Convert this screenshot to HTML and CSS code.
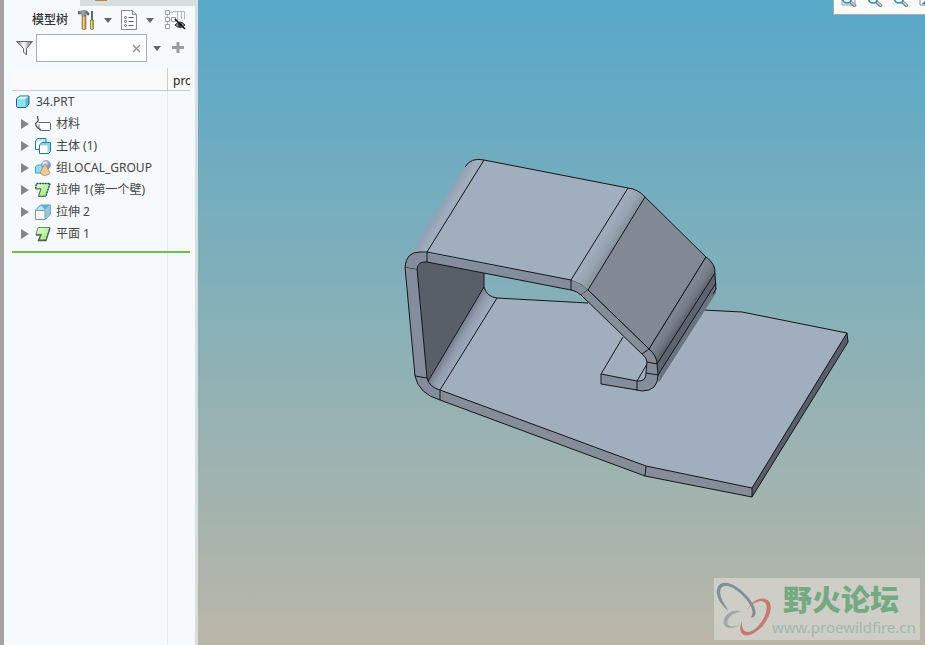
FILE: index.html
```html
<!DOCTYPE html>
<html lang="zh-CN">
<head>
<meta charset="utf-8">
<meta name="viewport" content="width=device-width, initial-scale=1">
<title>34.PRT</title>
<link rel="stylesheet" href="styles.css">
</head>
<body>
<svg class="defs" aria-hidden="true">
  <defs>
    <linearGradient id="steel" x1="0" x2="1"><stop offset="0" stop-color="#555c62"/><stop offset=".45" stop-color="#a9b0b5"/><stop offset="1" stop-color="#4c5258"/></linearGradient>
    <linearGradient id="wood" x1="0" x2="1"><stop offset="0" stop-color="#a87b30"/><stop offset=".4" stop-color="#f3d48e"/><stop offset="1" stop-color="#a2762f"/></linearGradient>
    <linearGradient id="funnel" x1="0" x2="1"><stop offset="0" stop-color="#777"/><stop offset=".45" stop-color="#fff"/><stop offset="1" stop-color="#666"/></linearGradient>
    <linearGradient id="leaf" x1="0" x2="1" y2="1"><stop offset="0" stop-color="#e3ffd3"/><stop offset="1" stop-color="#98e878"/></linearGradient>
    <radialGradient id="ball" cx=".35" cy=".3"><stop offset="0" stop-color="#fff"/><stop offset="1" stop-color="#8795d3"/></radialGradient>
    <symbol id="lens" viewBox="0 0 18 16"><path d="M9.500 11 14.500 15.500" stroke="#777e83" stroke-width="3.400"/><path d="m10 11 4 3.700" stroke="#d7dadd" stroke-width="1.300"/><circle cx="6" cy="7.500" r="4.500" fill="#e9f7fc" stroke="#338cad" stroke-width="1.600"/></symbol>
  </defs>
</svg>
<div class="app">
  <aside class="panel">
    <div class="tabs"><span class="tab-mark"></span></div>
    <div class="toolbar">
      <h1>模型树</h1>
      <button class="tool" aria-label="设置"><svg width="18" height="22" viewBox="0 0 18 22"><path d="M4 6h4v14q-2 1.500-4 0z" fill="url(#wood)" stroke="#8b692e" stroke-width=".6"/><path d="M0 2q2 1 3 0 5-2 8 2v2H9Q8 4 7 4v3H4V5H0z" fill="url(#steel)" stroke="#555c62" stroke-width=".5"/><path d="M14 2v9" stroke="#61686e" stroke-width="2"/><path d="M12.500 11h3v9q-1.500 1.500-3 0z" fill="url(#wood)" stroke="#8b692e" stroke-width=".6"/></svg></button>
      <button class="drop" aria-label="设置选项"></button>
      <button class="tool" aria-label="显示"><svg width="17" height="21" viewBox="0 0 17 21"><path d="M.5.500h11l4 4v15H.5z" fill="#fff" stroke="#858b90"/><path d="M11.500.500v4h4" fill="#dce0e2" stroke="#858b90"/><g fill="#fff" stroke="#555b60"><circle cx="4.500" cy="7.500" r="1"/><circle cx="4.500" cy="11.500" r="1"/><circle cx="4.500" cy="15.500" r="1"/><path d="M7.500 7.500h5m-5 4h5m-5 4h5"/></g></svg></button>
      <button class="drop" aria-label="显示选项"></button>
      <button class="tool last" aria-label="隐藏列"><svg width="22" height="22" viewBox="0 0 22 22" fill="none"><path d="M2.500 5v3m0 4v3M5 3.500h3m-3 7h3M8 2.500h11.500v8M12.500 3v9M16.500 3v7" stroke="#b5b8ba"/><g fill="#fff" stroke="#9a9da0"><path d="M.5 1.500h4v4h-4zM.5 8.500h4v4h-4zM.5 15.500h4v4h-4zM6.500 8.500h4v4h-4z"/></g><path d="M10 16q5-6 10 0-5 5-10 0z" fill="#888" stroke="#333"/><circle cx="15" cy="16" r="2" fill="#333"/><path d="m10 10 10 10" stroke="#111" stroke-width="1.500"/></svg></button>
    </div>
    <div class="filter">
      <svg width="18" height="16" viewBox="0 0 18 16" aria-hidden="true"><path d="M.5 1.500h16l-6 7V15l-3-3V8.500z" fill="url(#funnel)" stroke="#63676b"/></svg>
      <div class="search"><input type="text" aria-label="过滤"><button class="clear" aria-label="清除"><svg width="9" height="9" viewBox="0 0 9 9"><path d="m1 1 7 7m0-7L1 8" stroke="#8d9092" stroke-width="1.300"/></svg></button></div>
      <button class="drop" aria-label="过滤选项"></button>
      <button class="plus" aria-label="添加"><svg width="12" height="12" viewBox="0 0 12 12"><path d="M6 0v11M0 5.500h12" stroke="#999c9d" stroke-width="3"/></svg></button>
    </div>
    <div class="tree">
      <div class="tree-head"><span></span><span class="col">pro</span></div>
      <div class="tree-body">
        <ul>
          <li class="root"><svg width="16" height="16" viewBox="0 0 16 16"><path d="m1.500 5 3-3h9.500v8l-3 3.500H3q-1.500 0-1.500-1.500z" fill="#5eb7d8" stroke="#176989"/><path d="M2 5h8.500v8H3q-1 0-1-1z" fill="#91dff8"/><path d="m2 5 3-2.500h8.500L10.500 5z" fill="#d8f8ff"/></svg><span>34.PRT</span></li>
          <li><button class="expand" aria-label="展开"></button><svg width="16" height="16" viewBox="0 0 16 16" fill="none"><path d="M3 0q-1 1 0 3T1 7q-1 2 1 4l4 3.500" stroke="#505050" stroke-width="1.300"/><path d="M3.500 6.500H15l.5 1v6l-1 1H6.500L4 11.500V8.500" fill="#fff" stroke="#666"/></svg><span>材料</span></li>
          <li><button class="expand" aria-label="展开"></button><svg width="16" height="16" viewBox="0 0 16 16"><g stroke="#247b9c"><path d="m.5 3 2-2.500h8.500v9l-2 2H.5z" fill="#b8efff"/><path d="M1 3.500h7v7H1z" fill="#fff" stroke="none"/><path d="m4.500 7 2.500-2.500h8.500v9l-2 2h-9z" fill="#8bd9f1"/><path d="M5 7.500h7.500V15H5z" fill="#fff" stroke="none"/></g></svg><span>主体 (1)</span></li>
          <li><button class="expand" aria-label="展开"></button><svg width="16" height="16" viewBox="0 0 16 16"><path d="m.5 7 2-2h7v6l-2 2h-7z" fill="#8bdcf5" stroke="#4aa2c2"/><circle cx="11" cy="5" r="4.500" fill="url(#ball)" stroke="#8491c5" stroke-width=".7"/><path d="m10 3.500 5 9.500q-5 5-10 0z" fill="#eacb91" stroke="#a28352" stroke-width=".7"/></svg><span>组LOCAL_GROUP</span></li>
          <li><button class="expand" aria-label="展开"></button><svg width="16" height="16" viewBox="0 0 16 16"><path d="M1.500 1.500H15l-4 12.500H3.500l2.500-7.500H.5z" fill="url(#leaf)" stroke="#7ba56d"/><path d="M.5 6.500 1.500 1.500H15l-4 12.500" fill="none" stroke="#164f66" stroke-width="1.500" stroke-dasharray="1.500 1.200"/><path d="M.5 7H6l-2.500 7.500H11" fill="none" stroke="#657166"/></svg><span>拉伸 1(第一个壁)</span></li>
          <li><button class="expand" aria-label="展开"></button><svg width="16" height="16" viewBox="0 0 16 16"><path d="m.5 6 5-5h10v9l-5 5.500" fill="#bae7f8" stroke="#5798b4"/><path d="m10.500 6 5-5v9l-5 5z" fill="#8ccae3"/><path d="m6 1 4 5 5-5z" fill="#61adce"/><path d="M.5 6.500h9.500v9H.5z" fill="#f7f7f7" stroke="#8d8f91"/></svg><span>拉伸 2</span></li>
          <li><button class="expand" aria-label="展开"></button><svg width="16" height="16" viewBox="0 0 16 16"><path d="M3 1.500h12L11 14H3.500L6 8.500H1z" fill="url(#leaf)" stroke="#619550"/><path d="M1 9h5l-2.500 5.500H11L15 2" fill="none" stroke="#526058" stroke-width="1.300"/></svg><span>平面 1</span></li>
        </ul>
        <div class="insert-line"></div>
      </div>
    </div>
  </aside>
  <main class="view">
    <svg class="model" viewBox="198 0 727 645" preserveAspectRatio="xMinYMin meet" role="img" aria-label="34.PRT">
      <defs>
        <linearGradient id="bendLow" gradientUnits="userSpaceOnUse" x1="448" y1="337" x2="467" y2="348"><stop offset="0" stop-color="#606873"/><stop offset=".55" stop-color="#8f9bab"/><stop offset="1" stop-color="#a2aebf"/></linearGradient>
        <linearGradient id="bendTop" gradientUnits="userSpaceOnUse" x1="436" y1="207" x2="458" y2="220"><stop offset="0" stop-color="#8e9baf"/><stop offset=".5" stop-color="#a2adbd"/><stop offset="1" stop-color="#9faaba"/></linearGradient>
        <linearGradient id="bendMid" gradientUnits="userSpaceOnUse" x1="600" y1="234" x2="618" y2="245"><stop offset="0" stop-color="#a2adbe"/><stop offset=".5" stop-color="#98a4b2"/><stop offset="1" stop-color="#828c98"/></linearGradient>
        <linearGradient id="bendEnd" gradientUnits="userSpaceOnUse" x1="677" y1="303" x2="692" y2="313"><stop offset="0" stop-color="#818b96"/><stop offset=".5" stop-color="#747d87"/><stop offset="1" stop-color="#555a65"/></linearGradient>
      </defs>
      <path fill="#a1aebd" d="m497 298 91 5 115 7 39 2 105 21-95 155-106-22-206-76z"/>
      <path fill="#858d98" d="m440 390 206 76 106 22v9l-107-21-205-76z"/>
      <path fill="#595f6a" d="m847 333 1 9-96 155v-9z"/>
      <path class="edge" d="m497 298 91 5M703 310l39 2 105 21 1 9-96 155-107-21-205-76M440 390l206 76 106 22 95-155M646 466l-1 10M752 488v9"/>
      <path fill="#585f69" d="m417 268 4-6 7-1 56 11v15l-57 96z"/>
      <path fill="url(#bendLow)" d="m427 383 57-96q3 10 13 11l-57 92q-10-2-13-7z"/>
      <path class="edge" d="M484 273v14q3 10 13 11l-57 92M484 287l-57 96"/>
      <path fill="#838d9d" d="m405 267 12 2 10 109q2 9 13 12v10q-22-7-25-24z"/>
      <path class="edge" d="m405 267 10 109q4 18 25 24v-10q-11-3-13-12l-10-109M405 267l12 2M415 376l12 2"/>
      <path fill="url(#bendTop)" d="m410 256 55-89q6-10 19-7l-57 93q-10-2-17 3z"/>
      <path class="edge" d="M465 167q6-10 19-7"/>
      <path fill="#a1aebd" d="m427 252 57-92 144 28-57 92z"/>
      <path fill="#838d9c" d="M405 267q1-15 15-15l151 28q10 2 17 10l-7 5q-4-4-10-5l-144-28q-9-1-10 7z"/>
      <path class="edge" d="M405 267q1-15 15-15h7l144 28q10 2 17 10M417 269q1-8 10-7l144 28q6 1 10 5M427 252v10M571 280v10M588 290l-7 5M427 252l57-92 144 28"/>
      <path fill="url(#bendMid)" d="m571 280 57-92q10 1 17 9l-57 93q-8-8-17-10z"/>
      <path fill="#808994" d="m588 290 57-93 61 60-57 92z"/>
      <path class="edge" d="M571 280l57-92q10 1 17 9l-57 93 61 59 57-92-61-60"/>
      <path fill="#a1aebd" d="m601 374 22-37 24 25v10l-10 9z"/>
      <path class="edge" d="m601 374 22-37M637 381l10-17"/>
      <path fill="#838d9c" d="m588 290 61 59q8 7 8 15l1 11q0 16-16 16l-5-1-36-6v-10l36 7q9 1 9-8l1-11q0-4-5-8l-61-59z"/>
      <path fill="url(#bendEnd)" d="m649 349 57-92q10 7 9 17l-58 90q-1-9-8-15z"/>
      <path fill="#5d636f" d="m657 364 58-91 1 18-57 91z"/>
      <path fill="#6b737e" d="m658 375 58-92v10l-57 89z"/>
      <path class="edge" d="M649 349l57-92q10 7 9 17l1 15-3 5M657 364l58-91M658 375l58-92M588 290l61 59q8 7 8 15l1 11q0 16-16 16l-5-1-36-6v-10l36 7q9 1 9-8l1-11q0-4-5-8l-61-59M649 349l-7 5M647 362l10 2M646 373l12 2M637 381v10"/>
    </svg>
    <div class="view-tools">
      <button aria-label="重新调整"><svg width="18" height="16"><path d="M1 2v12h13V2" fill="none" stroke="#999"/><use href="#lens"/></svg></button>
      <button aria-label="放大"><svg width="18" height="16"><use href="#lens"/></svg></button>
      <button aria-label="缩小"><svg width="18" height="16"><use href="#lens"/></svg></button>
      <button aria-label="重画"><svg width="18" height="16"><path d="M1 2v12h13" fill="none" stroke="#888"/><path d="m3 13 7-7v7z" fill="#247c9e"/></svg></button>
    </div>
    <div class="watermark">
      <svg width="58" height="62" viewBox="0 0 60 62" aria-hidden="true"><path fill="#809097" fill-rule="evenodd" d="M3 15C2 3 12 1 23 8c12 8 21 20 20 28q-1 4-5 4 4-6-1-14C31 17 21 8 13 7 5 7 5 14 9 23l6 10Q4 24 3 15z"/><path fill="#c57972" d="M34 32c5-9 14-14 20-11 9 4 4 19-4 28-8 8-18 13-22 6q-2-4 1-12-1 8 3 11c5 3 13-3 18-11 6-10 6-19 0-20-5-1-11 3-16 9z"/><path fill="#9ca8a7" d="M28 34C18 29 8 40 10 46c2 6 10 6 18 1-7 3-13 3-14-1-1-5 5-12 14-12z"/></svg>
      <div class="watermark-text"><strong>野火论坛</strong><span>www.proewildfire.cn</span></div>
    </div>
  </main>
</div>
</body>
</html>
```
FILE: styles.css
```css
* { box-sizing: border-box; }
body { margin: 0; font: 12px/22px "Noto Sans", "Noto Sans CJK SC", sans-serif; color: #444; }
button { padding: 0; border: 0; background: none; display: flex; flex: none; }
svg { display: block; flex: none; }
.defs { position: absolute; width: 0; height: 0; }
.app { display: flex; height: 100vh; overflow: hidden; }
.panel { width: 198px; flex: none; display: flex; flex-direction: column; border-left: 4px solid #a6a2a2; border-right: 3px solid #d7dfe0; background: #f7fafc; }
.tabs { height: 6px; margin-left: 76px; padding-left: 15px; background: #d9dfdf; }
.tab-mark { display: block; width: 12px; height: 1px; background: #b58743; }
.toolbar { display: flex; align-items: center; height: 28px; padding-left: 28px; }
h1 { margin: 0; width: 46px; font-size: 12px; font-weight: 500; color: #333; white-space: nowrap; }
.drop { width: 8px; height: 22px; align-items: center; margin: 0 9px 0 8px; }
.drop::before { content: ""; border: 4px solid transparent; border-top: 5px solid #666; border-bottom: 0; }
.last { margin-left: 2px; }
.filter { display: flex; align-items: center; height: 28px; padding-left: 12px; }
.search { display: flex; align-items: center; width: 111px; height: 28px; margin-left: 2px; padding-right: 5px; border: 1px solid #a1b3b2; background: #fff; }
.search input { flex: 1; min-width: 0; height: 24px; border: 0; outline: 0; background: transparent; }
.filter .drop { margin: 0 11px 0 6px; }
.tree { flex: 1; display: flex; flex-direction: column; margin: 6px 5px 0 8px; }
.tree-head, .tree-body { display: grid; grid-template-columns: 155px 1fr; }
.tree-head { height: 23px; border-bottom: 1px solid #ccc; background: #fafafa; line-height: 25px; }
.col { padding-left: 5px; border-left: 1px solid #ccc; overflow: hidden; color: #222; }
.tree-body { flex: 1; grid-template-rows: auto 1fr; background: linear-gradient(#e8ebed, #e8ebed) 155px 0 / 1px 100% no-repeat; }
ul { grid-column: 1; margin: 0; padding: 0; list-style: none; }
li { display: flex; align-items: center; height: 22px; padding-left: 9px; white-space: nowrap; }
li span { margin-left: 5px; }
.root { padding-left: 3px; }
.expand { width: 14px; height: 14px; align-items: center; }
.expand::before { content: ""; border: 5px solid transparent; border-left: 8px solid #858585; border-right: 0; }
.insert-line { grid-column: 1 / 3; height: 2px; margin-top: 6px; background: #66c544; }
.view { position: relative; flex: 1; min-width: 0; background: linear-gradient(#57a8c9, #8bb1b6 53%, #bab6a8); }
.model { width: 100%; height: 100%; }
.edge { fill: none; stroke: #151619; stroke-width: 1; stroke-linejoin: round; }
.view-tools { position: absolute; top: 0; right: 0; display: flex; gap: 8px; width: 92px; height: 15px; padding-left: 7px; border: solid #aaa; border-width: 0 0 1px 1px; background: #f8fafb; overflow: hidden; align-items: flex-end; }
.view-tools button { height: 23px; }
.watermark { position: absolute; right: 5px; bottom: 5px; display: flex; width: 206px; height: 62px; background: #cecec7; overflow: hidden; }
.watermark-text { display: flex; flex-direction: column; white-space: nowrap; }
.watermark strong { padding-left: 11px; font: 900 29px/40px "Noto Sans CJK SC", sans-serif; color: #74aa82; }
.watermark span { font-size: 15px; line-height: 18px; color: #a0b9af; }
```
